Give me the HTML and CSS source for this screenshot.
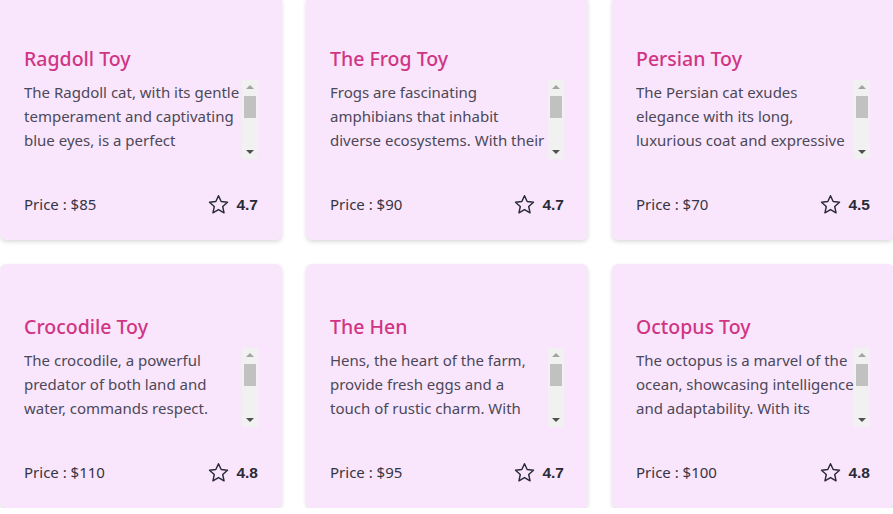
FILE: index.html
```html
<!DOCTYPE html>
<html lang="en">
<head>
<meta charset="utf-8">
<title>Toys</title>
<link rel="stylesheet" href="styles.css">
</head>
<body>
<div class="grid">
  <div class="card">
    <h2 class="title">Ragdoll Toy</h2>
    <div class="desc-box">
      <p class="desc">The Ragdoll cat, with its gentle temperament and captivating blue eyes, is a perfect companion to all cat lovers. This soft plush toy captures its calm and affectionate nature.</p>
      <div class="sb"><span class="up"></span><span class="thumb"></span><span class="down"></span></div>
    </div>
    <div class="footer">
      <span class="price">Price : $85</span>
      <span class="rating"><svg class="star" viewBox="0 0 24 24"><polygon points="12,2.8 14.8,8.9 21.4,9.6 16.4,14.1 17.8,20.7 12,17.3 6.2,20.7 7.6,14.1 2.6,9.6 9.2,8.9"/></svg><b>4.7</b></span>
    </div>
  </div>
  <div class="card">
    <h2 class="title">The Frog Toy</h2>
    <div class="desc-box">
      <p class="desc">Frogs are fascinating amphibians that inhabit diverse ecosystems. With their unique ability to leap and croak, they bring joy to children and adults alike.</p>
      <div class="sb"><span class="up"></span><span class="thumb"></span><span class="down"></span></div>
    </div>
    <div class="footer">
      <span class="price">Price : $90</span>
      <span class="rating"><svg class="star" viewBox="0 0 24 24"><polygon points="12,2.8 14.8,8.9 21.4,9.6 16.4,14.1 17.8,20.7 12,17.3 6.2,20.7 7.6,14.1 2.6,9.6 9.2,8.9"/></svg><b>4.7</b></span>
    </div>
  </div>
  <div class="card">
    <h2 class="title">Persian Toy</h2>
    <div class="desc-box">
      <p class="desc">The Persian cat exudes elegance with its long, luxurious coat and expressive eyes. A perfect cuddly friend for those who love a touch of class.</p>
      <div class="sb"><span class="up"></span><span class="thumb"></span><span class="down"></span></div>
    </div>
    <div class="footer">
      <span class="price">Price : $70</span>
      <span class="rating"><svg class="star" viewBox="0 0 24 24"><polygon points="12,2.8 14.8,8.9 21.4,9.6 16.4,14.1 17.8,20.7 12,17.3 6.2,20.7 7.6,14.1 2.6,9.6 9.2,8.9"/></svg><b>4.5</b></span>
    </div>
  </div>
  <div class="card">
    <h2 class="title">Crocodile Toy</h2>
    <div class="desc-box">
      <p class="desc">The crocodile, a powerful predator of both land and water, commands respect. With its rugged scales and toothy grin, this toy is a fun addition to any collection.</p>
      <div class="sb"><span class="up"></span><span class="thumb"></span><span class="down"></span></div>
    </div>
    <div class="footer">
      <span class="price">Price : $110</span>
      <span class="rating"><svg class="star" viewBox="0 0 24 24"><polygon points="12,2.8 14.8,8.9 21.4,9.6 16.4,14.1 17.8,20.7 12,17.3 6.2,20.7 7.6,14.1 2.6,9.6 9.2,8.9"/></svg><b>4.8</b></span>
    </div>
  </div>
  <div class="card">
    <h2 class="title">The Hen</h2>
    <div class="desc-box">
      <p class="desc">Hens, the heart of the farm, provide fresh eggs and a touch of rustic charm. With their cheerful clucks and soft feathers, they are loved by all.</p>
      <div class="sb"><span class="up"></span><span class="thumb"></span><span class="down"></span></div>
    </div>
    <div class="footer">
      <span class="price">Price : $95</span>
      <span class="rating"><svg class="star" viewBox="0 0 24 24"><polygon points="12,2.8 14.8,8.9 21.4,9.6 16.4,14.1 17.8,20.7 12,17.3 6.2,20.7 7.6,14.1 2.6,9.6 9.2,8.9"/></svg><b>4.7</b></span>
    </div>
  </div>
  <div class="card">
    <h2 class="title">Octopus Toy</h2>
    <div class="desc-box">
      <p class="desc">The octopus is a marvel of the ocean, showcasing intelligence and adaptability. With its ability to change colors and squeeze into tiny spaces, it amazes everyone.</p>
      <div class="sb"><span class="up"></span><span class="thumb"></span><span class="down"></span></div>
    </div>
    <div class="footer">
      <span class="price">Price : $100</span>
      <span class="rating"><svg class="star" viewBox="0 0 24 24"><polygon points="12,2.8 14.8,8.9 21.4,9.6 16.4,14.1 17.8,20.7 12,17.3 6.2,20.7 7.6,14.1 2.6,9.6 9.2,8.9"/></svg><b>4.8</b></span>
    </div>
  </div>
</div>
</body>
</html>
```
FILE: styles.css
```css
html, body {
  margin: 0;
  padding: 0;
  background: #ffffff;
  overflow: hidden;
}
body {
  font-family: "Noto Sans", "Open Sans", sans-serif;
}
.grid {
  display: grid;
  grid-template-columns: repeat(3, 282px);
  column-gap: 24px;
  row-gap: 24px;
  margin-top: -4px;
}
.card {
  box-sizing: border-box;
  height: 244px;
  background: #f9e6fc;
  border-radius: 6px;
  box-shadow: 0 2px 4px rgba(0, 0, 0, 0.14);
  padding: 49px 24px 24px;
  display: flex;
  flex-direction: column;
}
.title {
  margin: 0;
  font-size: 19.5px;
  line-height: 28px;
  font-weight: 500;
  color: #d03584;
}
.desc-box {
  margin-top: 7px;
  height: 79px;
  display: flex;
}
.desc {
  flex: 1;
  min-width: 0;
  margin: 0;
  overflow: hidden;
  font-size: 15px;
  line-height: 24px;
  color: #4c4858;
}
.sb {
  width: 16px;
  flex: none;
  background: #f1f1f1;
  display: flex;
  flex-direction: column;
  align-items: center;
}
.up {
  margin-top: 5px;
  width: 0;
  height: 0;
  border-left: 4px solid transparent;
  border-right: 4px solid transparent;
  border-bottom: 4px solid #a3a3a3;
}
.thumb {
  margin-top: 7px;
  width: 12px;
  height: 22px;
  background: #c1c1c1;
}
.down {
  margin-top: auto;
  margin-bottom: 5px;
  width: 0;
  height: 0;
  border-left: 4px solid transparent;
  border-right: 4px solid transparent;
  border-top: 4px solid #505050;
}
.footer {
  margin-top: auto;
  display: flex;
  align-items: center;
  justify-content: space-between;
  height: 24px;
}
.price {
  font-size: 15px;
  color: #363444;
}
.rating {
  display: flex;
  align-items: center;
  gap: 6px;
}
.star {
  width: 23px;
  height: 23px;
  fill: none;
  stroke: #2a2a36;
  stroke-width: 1.5;
  stroke-linejoin: round;
}
.rating b {
  font-family: "Liberation Sans", Arial, sans-serif;
  font-size: 15.5px;
  line-height: 24px;
  padding-top: 1px;
  font-weight: 700;
  color: #2a2a36;
}
```
